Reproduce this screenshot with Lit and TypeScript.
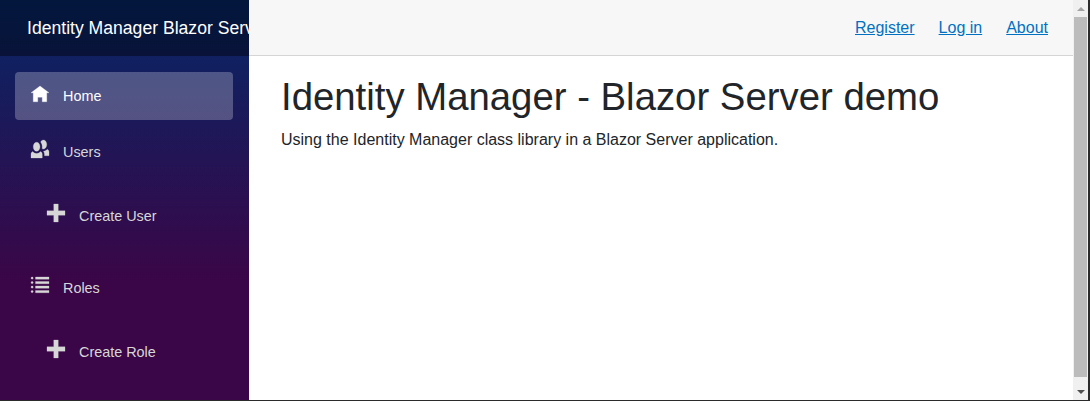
import { LitElement, html, css, svg } from "lit";
import { customElement } from "lit/decorators.js";

const ICONS: Record<string, { box: string; path: string }> = {
  home: { box: "0 -.89 8 8", path: "M4 0l-4 3h1v4h2v-2h2v2h2v-4.03l1 .03-4-3z" },
  people: {
    box: "0 0 8 8",
    path: "M5.5 0c-.51 0-.95.35-1.22.88.45.54.72 1.28.72 2.13 0 .29-.03.55-.09.81.19.11.38.19.59.19.83 0 1.5-.9 1.5-2s-.67-2-1.5-2zm-3 1c-.83 0-1.5.9-1.5 2s.67 2 1.5 2 1.5-.9 1.5-2-.67-2-1.5-2zm4.75 3.16c-.43.51-1.02.82-1.69.84.27.38.44.84.44 1.34v.66h2v-1.66c0-.52-.31-.97-.75-1.19zm-6.5 1c-.44.22-.75.67-.75 1.19v1.66h5v-1.66c0-.52-.31-.97-.75-1.19-.45.53-1.06.84-1.75.84s-1.3-.32-1.75-.84z",
  },
  plus: { box: "0 0 8 8", path: "M3 0v3h-3v2h3v3h2v-3h3v-2h-3v-3h-2z" },
  list: {
    box: "0 -.44 8 8",
    path: "M.5 0c-.28 0-.5.22-.5.5s.22.5.5.5.5-.22.5-.5-.22-.5-.5-.5zm1.5 0v1h6v-1h-6zm-1.5 2c-.28 0-.5.22-.5.5s.22.5.5.5.5-.22.5-.5-.22-.5-.5-.5zm1.5 0v1h6v-1h-6zm-1.5 2c-.28 0-.5.22-.5.5s.22.5.5.5.5-.22.5-.5-.22-.5-.5-.5zm1.5 0v1h6v-1h-6zm-1.5 2c-.28 0-.5.22-.5.5s.22.5.5.5.5-.22.5-.5-.22-.5-.5-.5zm1.5 0v1h6v-1h-6z",
  },
};

const NAV = [
  { label: "Home", icon: "home", active: true, sub: false, gap: 8 },
  { label: "Users", icon: "people", active: false, sub: false, gap: 16 },
  { label: "Create User", icon: "plus", active: false, sub: true, gap: 24 },
  { label: "Roles", icon: "list", active: false, sub: false, gap: 16 },
  { label: "Create Role", icon: "plus", active: false, sub: true, gap: 0 },
];

@customElement("app-root")
export class AppRoot extends LitElement {
  static styles = css`
    :host {
      display: block;
      width: 1090px;
      height: 401px;
      overflow: hidden;
      box-sizing: border-box;
      border-right: 2px solid #2b2b2b;
      border-bottom: 1px solid #2b2b2b;
      font-family: "Liberation Sans", Arial, sans-serif;
      font-size: 16px;
      color: #212529;
      background: #fff;
    }
    .page {
      display: flex;
      height: 100%;
    }
    .sidebar {
      width: 249px;
      flex: none;
      background-image: linear-gradient(180deg, #052767 0%, #3a0647 70%);
      overflow: hidden;
    }
    .brand-row {
      height: 56px;
      display: flex;
      align-items: center;
      padding-left: 27px;
      background: rgba(0, 0, 0, 0.4);
      color: #fff;
      font-size: 17.6px;
      white-space: nowrap;
      overflow: hidden;
    }
    nav {
      display: flex;
      flex-direction: column;
      padding: 16px 16px 0 15px;
    }
    .item {
      height: 48px;
      flex: none;
      display: flex;
      align-items: center;
      padding-left: 16px;
      border-radius: 4px;
      color: #d7d7d7;
      font-size: 14.4px;
      text-decoration: none;
    }
    .item.active {
      background: rgba(255, 255, 255, 0.25);
      color: #fff;
    }
    .item.sub {
      padding-left: 32px;
    }
    .item svg {
      width: 18px;
      height: 18px;
      flex: none;
      margin-right: 14px;
      margin-bottom: 6px;
      fill: currentColor;
      stroke: currentColor;
      stroke-width: 0.12;
      overflow: visible;
    }
    .main {
      flex: 1;
      min-width: 0;
      display: flex;
      flex-direction: column;
    }
    .top-row {
      height: 56px;
      box-sizing: border-box;
      flex: none;
      display: flex;
      align-items: center;
      justify-content: flex-end;
      gap: 24px;
      padding-right: 25px;
      background: #f7f7f7;
      border-bottom: 1px solid #d6d5d5;
    }
    .top-row a {
      color: #0071c1;
      text-decoration: underline;
    }
    .content {
      padding: 18px 32px 0;
    }
    h1 {
      margin: 0 0 8px;
      font-size: 38.35px;
      font-weight: 400;
      line-height: 46px;
    }
    p {
      margin: 0;
      line-height: 24px;
    }
    .scrollbar {
      width: 15px;
      flex: none;
      display: flex;
      flex-direction: column;
      background: #f0f0f0;
    }
    .arrow {
      flex: none;
      display: flex;
      justify-content: center;
      box-sizing: border-box;
    }
    .arrow.up {
      height: 17px;
      align-items: flex-end;
      padding-bottom: 6px;
    }
    .arrow.down {
      height: 23px;
      align-items: flex-start;
      padding-top: 13px;
    }
    .tri-up {
      width: 0;
      height: 0;
      border-left: 4px solid transparent;
      border-right: 4px solid transparent;
      border-bottom: 4px solid #a3a3a3;
    }
    .tri-down {
      width: 0;
      height: 0;
      border-left: 4px solid transparent;
      border-right: 4px solid transparent;
      border-top: 4px solid #505050;
    }
    .thumb {
      flex: 1;
      margin: 0 1px;
      background: #bcbcbc;
    }
  `;

  render() {
    return html`
      <div class="page">
        <aside class="sidebar">
          <div class="brand-row">Identity Manager Blazor Server</div>
          <nav>
            ${NAV.map(
              (n) => html`
                <a
                  class="item ${n.active ? "active" : ""} ${n.sub ? "sub" : ""}"
                  style="margin-bottom:${n.gap}px"
                >
                  <svg viewBox=${ICONS[n.icon].box}>
                    ${svg`<path d=${ICONS[n.icon].path}></path>`}
                  </svg>
                  ${n.label}
                </a>
              `
            )}
          </nav>
        </aside>
        <div class="main">
          <header class="top-row">
            <a>Register</a>
            <a>Log in</a>
            <a>About</a>
          </header>
          <main class="content">
            <h1>Identity Manager - Blazor Server demo</h1>
            <p>Using the Identity Manager class library in a Blazor Server application.</p>
          </main>
        </div>
        <div class="scrollbar">
          <div class="arrow up"><div class="tri-up"></div></div>
          <div class="thumb"></div>
          <div class="arrow down"><div class="tri-down"></div></div>
        </div>
      </div>
    `;
  }
}
